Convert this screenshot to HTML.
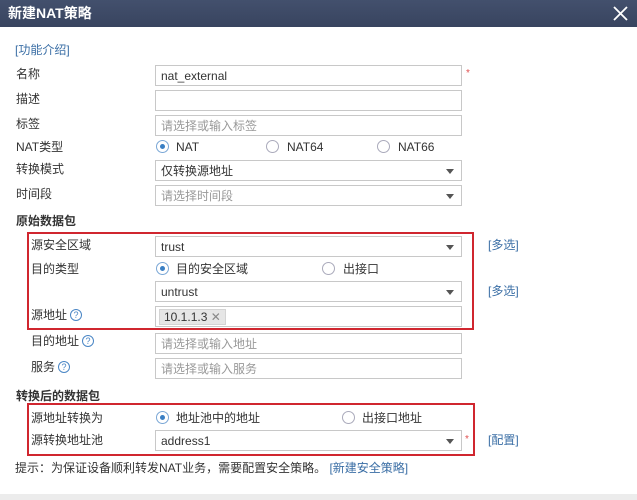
<!DOCTYPE html><html><head><meta charset="utf-8"><style>
*{box-sizing:border-box;margin:0;padding:0}
body{width:637px;height:500px;background:#fff;position:relative;overflow:hidden;font-family:"Liberation Sans","Noto Sans CJK SC",sans-serif;font-size:12px;color:#333}
.a{position:absolute;white-space:nowrap}
.hd{left:0;top:0;width:637px;height:27px;background:linear-gradient(#43506d,#38445f);color:#fff;font-weight:bold;font-size:14px;line-height:27px;padding-left:8px}
.in{position:absolute;left:155px;width:307px;height:21px;border:1px solid #c8c8c8;line-height:20px;padding-left:5px;background:#fff}
.ph{color:#999}
.sel::after{content:"";position:absolute;right:7px;top:8px;border-left:4px solid transparent;border-right:4px solid transparent;border-top:5px solid #555}
.lb{position:absolute;line-height:16px}
.lk{color:#3a6ea5}
.rd{position:absolute;width:13px;height:13px;border:1px solid #aab;border-radius:50%;background:#fff}
.rd.on::after{content:"";position:absolute;left:3px;top:3px;width:5px;height:5px;border-radius:50%;background:#3a7fc4}
.rd.on{border-color:#7aa7d6}
.bx{position:absolute;border:2px solid #d0262f}
.q{display:inline-block;width:12px;height:12px;border:1px solid #4a86c5;border-radius:50%;color:#4a86c5;font-size:9px;line-height:10px;text-align:center;vertical-align:1px;margin-left:3px}
.b{font-weight:bold}
.st{position:absolute;color:#e05050;font-size:10px}
</style></head><body>
<div class="a hd">新建NAT策略</div>
<svg class="a" style="left:613px;top:6px" width="15" height="15"><path d="M1 1L14 14M14 1L1 14" stroke="#fff" stroke-width="1.8"/></svg>
<div class="lb lk" style="left:15px;top:42px">[功能介绍]</div>
<div class="lb" style="left:16px;top:66px">名称</div><div class="in" style="top:65px">nat_external</div><div class="st" style="left:466px;top:68px">*</div>
<div class="lb" style="left:16px;top:91px">描述</div><div class="in" style="top:90px"></div>
<div class="lb" style="left:16px;top:116px">标签</div><div class="in ph" style="top:115px">请选择或输入标签</div>
<div class="lb" style="left:16px;top:139px">NAT类型</div>
<div class="rd on" style="left:156px;top:140px"></div><div class="lb" style="left:176px;top:139px">NAT</div>
<div class="rd" style="left:266px;top:140px"></div><div class="lb" style="left:287px;top:139px">NAT64</div>
<div class="rd" style="left:377px;top:140px"></div><div class="lb" style="left:398px;top:139px">NAT66</div>
<div class="lb" style="left:16px;top:161px">转换模式</div><div class="in sel" style="top:160px">仅转换源地址</div>
<div class="lb" style="left:16px;top:186px">时间段</div><div class="in sel ph" style="top:185px">请选择时间段</div>
<div class="lb b" style="left:16px;top:213px">原始数据包</div>
<div class="bx" style="left:27px;top:232px;width:447px;height:98px"></div>
<div class="lb" style="left:31px;top:237px">源安全区域</div><div class="in sel" style="top:236px">trust</div><div class="lb lk" style="left:488px;top:237px">[多选]</div>
<div class="lb" style="left:31px;top:261px">目的类型</div>
<div class="rd on" style="left:156px;top:262px"></div><div class="lb" style="left:176px;top:261px">目的安全区域</div>
<div class="rd" style="left:322px;top:262px"></div><div class="lb" style="left:343px;top:261px">出接口</div>
<div class="in sel" style="top:281px">untrust</div><div class="lb lk" style="left:488px;top:283px">[多选]</div>
<div class="lb" style="left:31px;top:307px">源地址<span class="q">?</span></div>
<div class="in" style="top:306px;padding-left:3px"><span style="display:inline-block;background:#e6e6e6;border:1px solid #d4d4d4;height:16px;line-height:14px;padding:0 4px;margin-top:1px">10.1.1.3 <span style="color:#888">✕</span></span></div>
<div class="lb" style="left:31px;top:333px">目的地址<span class="q">?</span></div><div class="in ph" style="top:333px">请选择或输入地址</div>
<div class="lb" style="left:31px;top:359px">服务<span class="q">?</span></div><div class="in ph" style="top:358px">请选择或输入服务</div>
<div class="lb b" style="left:16px;top:388px">转换后的数据包</div>
<div class="bx" style="left:27px;top:403px;width:448px;height:53px"></div>
<div class="lb" style="left:31px;top:410px">源地址转换为</div>
<div class="rd on" style="left:156px;top:411px"></div><div class="lb" style="left:176px;top:410px">地址池中的地址</div>
<div class="rd" style="left:342px;top:411px"></div><div class="lb" style="left:362px;top:410px">出接口地址</div>
<div class="lb" style="left:31px;top:432px">源转换地址池</div><div class="in sel" style="top:430px">address1</div><div class="st" style="left:465px;top:434px">*</div>
<div class="lb lk" style="left:488px;top:432px">[配置]</div>
<div class="lb" style="left:15px;top:460px">提示：为保证设备顺利转发NAT业务，需要配置安全策略。 <span class="lk">[新建安全策略]</span></div>
<div class="a" style="left:0;top:494px;width:637px;height:6px;background:#ececec"></div>
</body></html>
